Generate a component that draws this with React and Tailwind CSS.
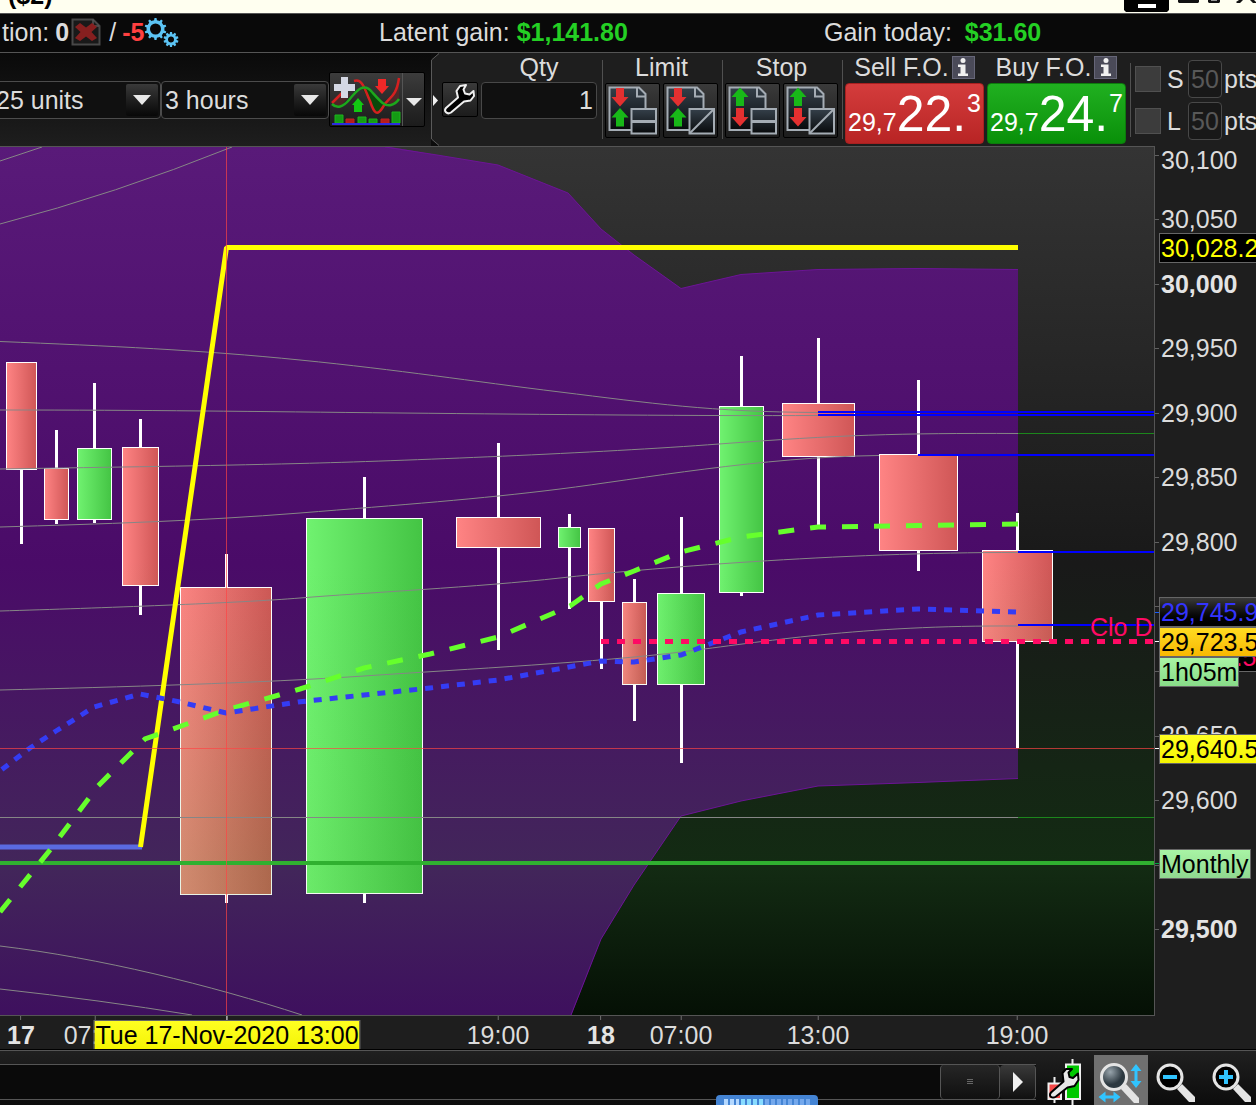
import { useState } from 'react';
import clsx from 'clsx';

const CHART_TOP = 146;

const candles = [
    { x: 21.5, left: 6.5, right: 36.5, top: 362.5, bottom: 469.5, high: 362, low: 544, up: false },
    { x: 56.5, left: 44.5, right: 68.5, top: 468.5, bottom: 519.5, high: 430, low: 524, up: false },
    { x: 94.5, left: 77.5, right: 111.5, top: 448.5, bottom: 519.5, high: 383, low: 523, up: true },
    { x: 140.5, left: 122.5, right: 158.5, top: 447.5, bottom: 585.5, high: 419, low: 615, up: false },
    { x: 226.5, left: 180.5, right: 271.5, top: 587.5, bottom: 894.5, high: 554, low: 903, up: false },
    { x: 364.5, left: 306.5, right: 422.5, top: 518.5, bottom: 893.5, high: 477, low: 903, up: true },
    { x: 498.5, left: 456.5, right: 540.5, top: 517.5, bottom: 547.5, high: 443, low: 650, up: false },
    { x: 569.5, left: 558.5, right: 580.5, top: 527.5, bottom: 547.5, high: 514, low: 609, up: true },
    { x: 601.5, left: 588.5, right: 614.5, top: 528.5, bottom: 601.5, high: 528, low: 669, up: false },
    { x: 634.5, left: 622.5, right: 646.5, top: 602.5, bottom: 684.5, high: 579, low: 721, up: false },
    { x: 681.5, left: 657.5, right: 704.5, top: 593.5, bottom: 684.5, high: 517, low: 763, up: true },
    { x: 741.5, left: 719.5, right: 763.5, top: 406.5, bottom: 592.5, high: 356, low: 596, up: true },
    { x: 818.5, left: 782.5, right: 854.5, top: 403.5, bottom: 456.5, high: 338, low: 525, up: false },
    { x: 918.5, left: 879.5, right: 957.5, top: 454.5, bottom: 550.5, high: 380, low: 571, up: false },
    { x: 1017.5, left: 982.5, right: 1052.5, top: 550.5, bottom: 641.5, high: 513, low: 748, up: false },
];

const ribbons = [
    'M0 161 L42 147',
    'M0 224 Q115 194 232 147',
    'M0 341.5 C110 346 200 350 300 360 S470 381 560 392 S710 412 818 412.5',
    'M0 410 C150 410 250 411.5 400 413 S700 416 818 415.5',
    'M0 469 C120 467 200 466 300 463.5 S600 453 719 444 S900 433 1018 433.5',
    'M0 527 C100 524 200 521 300 513 S480 499 560 489 S760 457 879 455.5',
    'M0 611 C100 608 240 603 300 598 S480 587 560 578 S840 552 1018 552.5',
    'M0 690 C120 687 260 683 364 676 S600 662 681 652 S860 625 1018 626',
    'M0 946 C100 958 210 985 302 1015',
    'M0 989 Q100 1000 192 1015',
];

const timeLabels = [
    { x: 21, text: '17', bold: true },
    { x: 95, text: '07:00' },
    { x: 498, text: '19:00' },
    { x: 601, text: '18', bold: true },
    { x: 681, text: '07:00' },
    { x: 818, text: '13:00' },
    { x: 1017, text: '19:00' },
];

const priceLabels = [
    { y: 160, text: '30,100' },
    { y: 219, text: '30,050' },
    { y: 284, text: '30,000', bold: true },
    { y: 348, text: '29,950' },
    { y: 413, text: '29,900' },
    { y: 477, text: '29,850' },
    { y: 542, text: '29,800' },
    { y: 735, text: '29,650' },
    { y: 800, text: '29,600' },
    { y: 929, text: '29,500', bold: true },
];

const priceTicks = [155, 219, 284, 348, 413, 477, 542, 606, 671, 736, 800, 865, 929];

const priceTags = [
    { y: 248, text: '30,028.2', style: 'bg-black text-[#ffff00]' },
    { y: 657, text: '29,711.5', style: 'bg-black text-[#ff0a64]' },
    { y: 612, text: '29,745.9', style: 'bg-linear-to-b from-[#3a3a3a] to-black text-[#3434ff]' },
    { y: 642, text: '29,723.5', style: 'bg-linear-to-b from-[#ffdc20] to-[#f8b800] text-black' },
    { y: 672, text: '1h05m', style: 'bg-linear-to-b from-[#a8f4a4] to-[#88dc88] text-black' },
    { y: 749, text: '29,640.5', style: 'bg-linear-to-b from-[#ffff20] to-[#f4f400] text-black' },
    { y: 864, text: 'Monthly', style: 'bg-linear-to-b from-[#a8f4a4] to-[#90d890] text-black' },
];

function TitleBar() {
    return (
        <header className="relative h-[13px] overflow-hidden bg-[#fffff0] text-black">
            <span className="absolute bottom-1 left-2 font-bold leading-[28px]">($2)</span>
            <svg className="absolute top-0 right-0" width="136" height="13" viewBox="1120 0 136 13">
                <path d="M1124 0h45v10l-2 2h-41l-2-2z" fill="#000" />
                <path d="M1138 4h18v4h-18z" fill="#fff" />
                <path d="M1178 0h21v2l-1 1h-19l-1-1zM1208 0h12v2l-1 1h-10l-1-1zM1236 2l3-2h4l-3 3h-3zM1250 0h4l3 3h-4z" fill="#111" />
                <path d="M1211 0h6v1h-6z" fill="#999" />
            </svg>
        </header>
    );
}

function Gear({ cx, cy, r, hole }) {
    const teeth = [0, 36, 72, 108, 144, 180, 216, 252, 288, 324];
    return (
        <g transform={`translate(${cx} ${cy})`}>
            {teeth.map((a) => (
                <path key={a} transform={`rotate(${a})`} d={`M-1.7 ${-r + 2}L-1 ${-r - 2}H1L1.7 ${-r + 2}z`} fill="#5cc4f4" />
            ))}
            <circle r={(r + hole) / 2} fill="none" stroke="#5cc4f4" strokeWidth={r - hole} />
        </g>
    );
}

function StatusBar() {
    return (
        <div className="grid h-[40px] grid-cols-[379fr_445fr_432fr] items-center border-y border-[#555] bg-[#090909] pb-0.5">
            <div className="flex items-center pl-0.5">
                <span>tion:</span>
                <b className="ml-1.5">0</b>
                <button aria-label="Close position" className="ml-0.5">
                    <svg width="30" height="28" viewBox="0 0 30 28">
                        <path d="M1.5 1.5H22L28.5 8V26.5H1.5z" fill="#191919" stroke="#484848" strokeWidth="2" />
                        <path d="M22 1.5V8H28" fill="none" stroke="#555" strokeWidth="1.5" />
                        <path d="M4 9L9 5L15 9.5L21 5L26 9L20.5 14L26 20L21 23L15 18.5L9 23L4 20L9.5 14z" fill="#861f1f" />
                    </svg>
                </button>
                <span className="ml-2">/</span>
                <b className="ml-1.5 text-[#ff4040]">-5</b>
                <button aria-label="Settings">
                    <svg width="36" height="31" viewBox="0 0 36 31">
                        <Gear cx={11.5} cy={12} r={9} hole={5.5} />
                        <Gear cx={27} cy={22.5} r={5.5} hole={3} />
                    </svg>
                </button>
            </div>
            <div className="whitespace-nowrap">
                Latent gain: <b className="text-[#24d024]">$1,141.80</b>
            </div>
            <div className="whitespace-nowrap">
                Gain today: <b className="ml-1.5 text-[#24d024]">$31.60</b>
            </div>
        </div>
    );
}

function Dropdown({ label, options, className }) {
    const [value, setValue] = useState(options[0]);
    return (
        <div className={clsx('relative flex h-[38px] items-center rounded-sm border border-[#4c4c4c] bg-[#101010]', className)}>
            <select
                aria-label={label}
                value={value}
                onChange={(e) => setValue(e.target.value)}
                className="h-full w-full appearance-none bg-transparent pl-[3px] leading-[28px] outline-none"
            >
                {options.map((o) => (
                    <option key={o}>{o}</option>
                ))}
            </select>
            <span className="pointer-events-none absolute right-0.5 flex h-8 w-8 items-center justify-center rounded-xs bg-linear-to-b from-[#3a3a3a] to-[#080808]">
                <svg width="18" height="10" viewBox="0 0 18 10">
                    <path d="M0 0h18l-9 10z" fill="#e8e8e8" />
                </svg>
            </span>
        </div>
    );
}

function IndicatorButton() {
    return (
        <div className="flex h-[55px] w-24 shrink-0 rounded-xs border border-black bg-linear-to-b from-[#3c3c3c] to-[#1c1c1c]">
            <button aria-label="Add indicator" className="w-[73px] border-r border-[#555]">
                <svg width="72" height="53" viewBox="0 0 72 53">
                    <path d="M2 30L14 19L20 22L10 34z" fill="#662424" opacity=".6" />
                    <path d="M54 30L62 22L69 8V25L62 31z" fill="#662424" opacity=".6" />
                    <path d="M31 14C39 14 46 24 54 31C51 42 47 44 44 38C39 30 36 20 31 14z" fill="#0a480a" />
                    <path d="M2 30L12 20M24 8C33 5 35 18 40 28C44 40 47 44 53 34C58 24 66 26 69 5" fill="none" stroke="#d42020" strokeWidth="2.5" />
                    <path d="M2 31C7 36 13 34 19 27C27 17 34 9 42 19C50 28 55 34 61 32C65 31 67 29 69 26" fill="none" stroke="#1ca81c" strokeWidth="2.5" />
                    <path d="M11 4h7v7h7v7h-7v7h-7v-7h-7v-7h7z" fill="#d4d8e4" />
                    <path d="M48 6h8v7h3l-7 8l-7-8h3z" fill="#f02828" />
                    <path d="M28 25l6 7h-2v7h-8v-7h-2z" fill="#12c812" />
                    <path d="M5 42h8v8h-8zM28 44h8v6h-8zM39 46h8v4h-8zM62 39h8v11h-8z" fill="#149c14" stroke="#1cb41c" />
                    <path d="M16 46h8v4h-8zM51 46h8v4h-8z" fill="#b41c1c" stroke="#c42020" />
                    <path d="M2 50h68v2h-68z" fill="#2c2ce0" />
                </svg>
            </button>
            <button aria-label="Indicator list" className="flex flex-1 items-center justify-center pt-1">
                <svg width="16" height="8" viewBox="0 0 16 8">
                    <path d="M0 0h16l-8 8z" fill="#e8e8e8" />
                </svg>
            </button>
        </div>
    );
}

function OrderButton({ label, kind, split }) {
    const limit = kind === 'limit';
    return (
        <button aria-label={label} className="h-[55px] w-[55px] rounded-xs border border-black bg-linear-to-b from-[#3a3a3a] to-[#1c1c1c]">
            <svg width="53" height="53" viewBox="0 0 53 53">
                <defs>
                    <linearGradient id="sheet" x1="0" y1="0" x2="0" y2="1">
                        <stop offset="0" stopColor="#35404a" />
                        <stop offset="1" stopColor="#080a0c" />
                    </linearGradient>
                </defs>
                <path d="M3.5 3.5H33L39.5 10V46H3.5z" fill="url(#sheet)" stroke="#a4acb4" strokeWidth="2" />
                <path d="M31 4V12.5H40" fill="none" stroke="#a4acb4" strokeWidth="2" />
                <path
                    d={limit ? 'M10 4h8v9h4.5l-8.5 9.500l-8.500-9.500H10z' : 'M10 24h8v9h4.500l-8.500 9.500l-8.500-9.500H10z'}
                    fill="#e43030"
                />
                <path
                    d={limit ? 'M14 24l8.500 9.500H18v9h-8v-9H5.500z' : 'M14 3.500l8.500 9.500H18v9h-8v-9H5.500z'}
                    fill="#18b818"
                />
                <path d="M25.5 25H50V49.5H25.5z" fill="url(#sheet)" stroke="#a4acb4" strokeWidth="2" />
                {split ? (
                    <path d="M25 37.5H50" stroke="#a4acb4" strokeWidth="3" />
                ) : (
                    <path d="M25.5 49.5L50 25" stroke="#a4acb4" strokeWidth="2" />
                )}
            </svg>
        </button>
    );
}

function OrderGroup({ title, kind }) {
    return (
        <div className="mt-[7px] flex h-[79px] w-[120px] shrink-0 border-l border-[#505050] pl-0.5">
            <div className="-mt-[7px] flex flex-col items-center gap-0.5">
                <span>{title}</span>
                <div className="flex gap-[3px]">
                    <OrderButton label={`${title} order`} kind={kind} split />
                    <OrderButton label={`${title} order, set level`} kind={kind} />
                </div>
            </div>
        </div>
    );
}

function PriceButton({ title, lead, main, pip, buy }) {
    return (
        <div className="flex w-[139px] shrink-0 flex-col gap-0.5">
            <div className="flex items-center justify-center gap-[3px] whitespace-nowrap">
                <span>{title}</span>
                <button
                    aria-label={`${title} info`}
                    className="flex h-[23px] w-[23px] items-center justify-center border border-[#666678] bg-[#4a4a58]"
                >
                    <svg width="14" height="18" viewBox="0 0 14 18">
                        <circle cx="7" cy="2.5" r="2.5" fill="#f0f0f0" />
                        <path d="M2 6.5H9.5V15.5H12V18H2V15.5H4.5V9H2z" fill="#f0f0f0" />
                    </svg>
                </button>
            </div>
            <button
                className={clsx(
                    'flex h-[61px] items-baseline rounded-sm border px-0.5 pt-[5px] text-white',
                    buy ? 'border-[#0c7c0c] bg-linear-to-b from-[#20b020] to-[#089008]' : 'border-[#a82020] bg-linear-to-b from-[#d43c3c] to-[#b82424]'
                )}
            >
                <span>{lead}</span>
                <span className="text-[50px] leading-[50px]">{main}</span>
                <span className="ml-auto self-start">{pip}</span>
            </button>
        </div>
    );
}

function PointsRow({ id, name }) {
    const [on, setOn] = useState(false);
    return (
        <div className="flex items-center">
            <input
                id={id}
                type="checkbox"
                checked={on}
                onChange={() => setOn(!on)}
                className="h-[26px] w-[26px] shrink-0 appearance-none border border-[#505050] bg-[#3c3c3c] checked:bg-[#888]"
            />
            <label htmlFor={id} className="ml-1.5 w-[21px] shrink-0">{name}</label>
            <input
                aria-label={`${name} points`}
                defaultValue="50"
                disabled
                className="h-[38px] w-[34px] shrink-0 rounded-sm border border-[#484848] bg-[#181818] text-center text-[#585858]"
            />
            <span className="ml-0.5">pts</span>
        </div>
    );
}

function Toolbar() {
    const [qty, setQty] = useState('1');
    return (
        <div className="flex h-[93px] overflow-hidden bg-[#1e1e1e]">
            <div className="flex w-[431px] shrink-0 items-center bg-linear-to-b from-[#0a0a0a] to-[#1e1e1e]">
                <Dropdown label="Units" options={['25 units', '50 units', '100 units']} className="-ml-2 w-[169px]" />
                <Dropdown label="Timeframe" options={['3 hours', '4 hours', 'Daily']} className="w-[168px]" />
                <IndicatorButton />
            </div>

            <div className="flex flex-1">
                <svg className="shrink-0" width="11" height="93" viewBox="0 0 11 93">
                    <path d="M0 0H8L.5 7V86L8 93H0z" fill="#0c0c0c" />
                    <path d="M8 .5L.5 7V86L8 92.5" fill="none" stroke="#5a5a5a" />
                    <path d="M2 42l5 5.5l-5 5.5z" fill="#f0f0f0" />
                </svg>
                <button aria-label="Order settings" className="mt-[29px] h-[35px] w-[36px] shrink-0 rounded-xs border border-black bg-linear-to-b from-[#3a3a3a] to-[#1c1c1c]">
                    <svg width="34" height="33" viewBox="0 0 34 33">
                        <path d="M3 25L15 14.5L13.5 8L17 3L23 2L20.5 6.5L22 10.5L26.500 11.500L30.500 8L31 13L27.500 17.500L21 18.500L8 29.500C4 32 .5 28 3 25z" fill="#000" stroke="#f0f0f0" strokeWidth="2" strokeLinejoin="round" />
                    </svg>
                </button>
                <div className="mx-[3px] flex w-[116px] shrink-0 flex-col items-center gap-px">
                    <label htmlFor="qty">Qty</label>
                    <input
                        id="qty"
                        value={qty}
                        onChange={(e) => setQty(e.target.value)}
                        className="h-[37px] w-full rounded-sm border border-[#484848] bg-[#101010] px-[3px] text-right outline-none"
                    />
                </div>
                <div className="ml-0.5 flex">
                    <OrderGroup title="Limit" kind="limit" />
                    <OrderGroup title="Stop" kind="stop" />
                    <div className="mt-[7px] mr-0.5 h-[79px] border-l border-[#505050]" />
                </div>
                <div className="flex gap-[3px]">
                    <PriceButton title="Sell F.O." lead="29,7" main="22." pip="3" />
                    <PriceButton title="Buy F.O." lead="29,7" main="24." pip="7" buy />
                </div>
                <div className="mt-2.5 mr-1 ml-1 h-[74px] border-l border-[#505050]" />
                <div className="mt-[7px] flex flex-col gap-1">
                    <PointsRow id="stop-points" name="S" />
                    <PointsRow id="limit-points" name="L" />
                </div>
            </div>
        </div>
    );
}

function Chart() {
    return (
        <svg className="block h-[868px] w-full" viewBox="0 147 1154 868" preserveAspectRatio="xMinYMin slice">
            <defs>
                <linearGradient id="back" gradientUnits="userSpaceOnUse" x1="0" y1="147" x2="0" y2="1015">
                    <stop offset="0" stopColor="#343434" />
                    <stop offset=".48" stopColor="#191919" />
                    <stop offset=".83" stopColor="#132b13" />
                    <stop offset="1" stopColor="#051005" />
                </linearGradient>
                <linearGradient id="cloud" gradientUnits="userSpaceOnUse" x1="0" y1="147" x2="0" y2="1015">
                    <stop offset="0" stopColor="#591a79" />
                    <stop offset=".48" stopColor="#4a0b68" />
                    <stop offset=".83" stopColor="#42265a" />
                    <stop offset="1" stopColor="#3e105e" />
                </linearGradient>
                <linearGradient id="down">
                    <stop offset="0" stopColor="#ff8484" />
                    <stop offset="1" stopColor="#cf5656" />
                </linearGradient>
                <linearGradient id="up">
                    <stop offset="0" stopColor="#70f270" />
                    <stop offset="1" stopColor="#44c444" />
                </linearGradient>
                <linearGradient id="tint" gradientUnits="userSpaceOnUse" x1="0" y1="560" x2="0" y2="870">
                    <stop offset="0" stopColor="#40a030" stopOpacity="0" />
                    <stop offset="1" stopColor="#40a030" stopOpacity=".24" />
                </linearGradient>
            </defs>

            <rect x="0" y="147" width="2400" height="868" fill="url(#back)" />
            <path
                d="M-2 146H385L437 155L498 165L568 193L601 229L634 255L681 288.5L741 274.5L818 269.5L918 268.5L1018 269.5V778.5L918 782.5L818 786L741 801L681 816L634 885L601 939L571 1016H-2z"
                fill="url(#cloud)"
            />
            <path d="M385 147L437 155L498 165L568 193L601 229L634 255L681 288.5L741 274.5L818 269.5L918 268.5L1018 269.5M1018 778.5L918 782.5L818 786L741 801L681 816L634 885L601 939L571 1015" fill="none" stroke="#6c1496" />

            {candles.map((c) => (
                <g key={c.x}>
                    <path d={`M${c.x} ${c.high}V${c.low}`} stroke="#fff" strokeWidth="3" />
                    <rect x={c.left} y={c.top} width={c.right - c.left} height={c.bottom - c.top} fill={c.up ? 'url(#up)' : 'url(#down)'} stroke="#fff" />
                    <rect
                        x={c.left}
                        y={c.top}
                        width={c.right - c.left}
                        height={c.bottom - c.top}
                        fill="url(#tint)"
                        opacity={c.up ? 0.4 : 1}
                    />
                </g>
            ))}

            {/* moving average ribbon */}
            {ribbons.map((d) => (
                <path key={d} d={d} fill="none" stroke="#868686" />
            ))}
            <path d="M0 817.5H1018" stroke="#868686" />
            <path d="M1018 817.5H2400M1018 433.5H2400" stroke="#1c861c" />

            {/* session pivots */}
            <path d="M0 847H142" stroke="#5a6ae0" strokeWidth="5" />
            <path d="M140.5 847L226.5 247.5H1018" fill="none" stroke="#ffff00" strokeWidth="5" strokeLinejoin="bevel" />
            <path d="M0 863H2400" stroke="#30b030" strokeWidth="4" />

            <path
                d="M1018 524L918 525.5L818 527L741 537L681 552L634 571L601 584L570 606L498 637L430 654L364 668L300 689L226 710L145 739L98 786L50 850L0 912"
                fill="none"
                stroke="#66ff2c"
                strokeWidth="5"
                strokeDasharray="16 16"
            />
            <path
                d="M1016 612L918 609L818 615L741 632L681 655L634 662L601 661L569 667L498 680L430 688L364 695L298 702L226 713L180 702L140 694L94 707L56 731L30 748L0 771"
                fill="none"
                stroke="#343cf4"
                strokeWidth="5"
                strokeDasharray="8 8"
            />

            <path d="M818 412H2400M818 415H2400M918 455H2400M1018 552H2400M1018 625H2400" stroke="#0000ff" strokeWidth="2" />
            <path d="M601 641.5H2400" stroke="#ff0a64" strokeWidth="5" strokeDasharray="8 8" />
            <text x="1090" y="636" fill="#ff0a64" fontSize="25">Clo D</text>

            {/* cursor */}
            <path d="M226.5 147V1015M0 748.5H2400" stroke="#ff4444" strokeOpacity=".68" />
        </svg>
    );
}

function PriceAxis() {
    return (
        <div className="relative w-[102px] shrink-0 overflow-hidden border-l border-[#555] bg-[#1e1e1e]">
            {priceTicks.map((y) => (
                <i key={y} className="absolute left-0 h-px w-1 bg-[#606060]" style={{ top: y - CHART_TOP }} />
            ))}
            <i className="absolute left-0 h-px w-1 bg-blue-600" style={{ top: 612 - CHART_TOP }} />
            <i className="absolute left-0 h-px w-1 bg-white" style={{ top: 641 - CHART_TOP }} />
            <i className="absolute left-0 h-px w-1 bg-white" style={{ top: 748 - CHART_TOP }} />
            <i className="absolute left-0 h-px w-1 bg-green-600" style={{ top: 863 - CHART_TOP }} />
            {priceLabels.map((p) => (
                <span
                    key={p.text}
                    className={clsx('absolute left-1.5 -translate-y-1/2', p.bold && 'font-bold text-[#e4e4e4]')}
                    style={{ top: p.y - CHART_TOP }}
                >
                    {p.text}
                </span>
            ))}
            {priceTags.map((t) => (
                <span
                    key={t.text}
                    className={clsx('absolute left-1 -translate-y-1/2 border border-[#666] px-px whitespace-nowrap', t.style)}
                    style={{ top: t.y - CHART_TOP }}
                >
                    {t.text}
                </span>
            ))}
        </div>
    );
}

function TimeAxis() {
    return (
        <div className="relative h-[35px] overflow-hidden bg-[#1e1e1e]">
            <div className="mr-[101px] border-t border-[#555]" />
            {timeLabels.map((t) => (
                <div key={t.x} className="absolute top-px flex -translate-x-1/2 flex-col items-center gap-px" style={{ left: t.x }}>
                    <i className="h-1 w-px bg-[#707070]" />
                    <span className={clsx(t.bold && 'font-bold text-[#e4e4e4]')}>{t.text}</span>
                </div>
            ))}
            <div className="absolute top-px flex -translate-x-1/2 flex-col items-center" style={{ left: 227 }}>
                <i className="h-1 w-px bg-white" />
                <span className="border border-[#666] bg-linear-to-b from-[#ffff20] to-[#f4f400] px-px whitespace-nowrap text-black">
                    Tue 17-Nov-2020 13:00
                </span>
            </div>
        </div>
    );
}

function Magnifier({ sign }) {
    return (
        <svg width="41" height="41" viewBox="0 0 41 41">
            <path d="M22 26l5-5l13 13v5h-6z" fill="#e4e4e4" />
            <circle cx="15" cy="14" r="12" fill="#000" stroke="#e4e4e4" strokeWidth="3" />
            <path d="M8 12h14v4h-14z" fill="#30c4ff" />
            {sign === 'plus' && <path d="M13 7h4v14h-4z" fill="#30c4ff" />}
        </svg>
    );
}

function Footer() {
    return (
        <footer className="relative flex h-[55px] justify-between overflow-hidden border-t border-[#555] bg-linear-to-b from-[#202020] to-[#0c0c0c] outline outline-black">
            <div className="mt-[13px] flex h-[36px] flex-1 border-y border-[#555] bg-[#0a0a0a]">
                <div className="flex-1" />
                <button aria-label="Scroll thumb" className="w-[60px] rounded-sm border-x border-[#555] bg-linear-to-b from-[#262626] to-[#101010]">
                    <svg className="mx-auto" width="6" height="6" viewBox="0 0 6 6">
                        <path d="M0 .5H6M0 2.5H6M0 4.5H6" stroke="#666" />
                    </svg>
                </button>
                <button aria-label="Scroll right" className="flex w-9 items-center justify-center rounded-sm border-r border-[#555] bg-linear-to-b from-[#3a3a3a] to-[#101010]">
                    <svg width="10" height="20" viewBox="0 0 10 20">
                        <path d="M0 0l10 10l-10 10z" fill="#f0f0f0" />
                    </svg>
                </button>
            </div>
            <div className="flex shrink-0 pt-1 pl-2.5">
                <button aria-label="Candle settings" className="flex w-[36px] items-start pt-1">
                    <svg width="36" height="46" viewBox="0 0 36 46">
                        <path d="M8.5 18V44M26.5 0V46" stroke="#f0f0f0" strokeWidth="2" />
                        <path d="M2.5 24.5H15V40H2.5z" fill="#f44848" stroke="#f0f0f0" strokeWidth="2" />
                        <path d="M20 5.5H34V40H20z" fill="#00c800" stroke="#f0f0f0" strokeWidth="2" />
                        <path d="M5 33.5L17.5 22.5L16.5 14L20 10L26 10L22.5 13.5L23.5 18L27 19L32 14.5L32.5 21L28.5 27L21.5 28.5L10 37.5C6 40 2 37 5 33.5z" fill="#e8e8e8" stroke="#000" strokeWidth="2" strokeLinejoin="round" />
                    </svg>
                </button>
                <button aria-label="Fit to window" className="ml-3 h-[50px] w-[54px] bg-[#707070]">
                    <svg width="54" height="50" viewBox="0 0 54 50">
                        <defs>
                            <radialGradient id="lens" cx=".35" cy=".3">
                                <stop offset="0" stopColor="#98a4ac" />
                                <stop offset="1" stopColor="#2c3840" />
                            </radialGradient>
                        </defs>
                        <path d="M27 34l5-5l13 14v5h-5z" fill="#e4e4e4" />
                        <circle cx="20" cy="22" r="12.5" fill="url(#lens)" stroke="#e4e4e4" strokeWidth="3" />
                        <path d="M42 9l5.5 7h-4v10h4l-5.5 7l-5.500-7h4v-10h-4z" fill="#30c4ff" />
                        <path d="M4.5 42l7-5.5v4h8v-4l7 5.500l-7 5.500v-4h-8v4z" fill="#30c4ff" />
                    </svg>
                </button>
                <button aria-label="Zoom out" className="ml-[7px] flex w-[56px] items-start pt-2">
                    <Magnifier sign="minus" />
                </button>
                <button aria-label="Zoom in" className="flex w-[45px] items-start pt-2">
                    <Magnifier sign="plus" />
                </button>
            </div>
            <div className="absolute bottom-0 left-[57%] flex h-[10px] w-[102px] items-end gap-0.5 rounded-t-sm bg-[#4484d4] px-2">
                {Array.from({ length: 15 }, (_, i) => (
                    <i key={i} className={clsx('h-1.5 w-1', i < 3 ? 'bg-[#b4d8ff]' : i < 7 ? 'bg-[#88dcff]' : 'bg-[#74a8ec]')} />
                ))}
            </div>
        </footer>
    );
}

export default function App() {
    return (
        <div className="flex min-h-screen flex-col overflow-hidden bg-[#1e1e1e] font-['Liberation_Sans',Arial,sans-serif] text-[25px] leading-[28px] text-[#dcdcdc]">
            <TitleBar />
            <StatusBar />
            <Toolbar />
            <main>
                <div className="flex">
                    <div className="min-w-0 flex-1 border-t border-[#555]">
                        <Chart />
                    </div>
                    <PriceAxis />
                </div>
                <TimeAxis />
            </main>
            <Footer />
        </div>
    );
}
